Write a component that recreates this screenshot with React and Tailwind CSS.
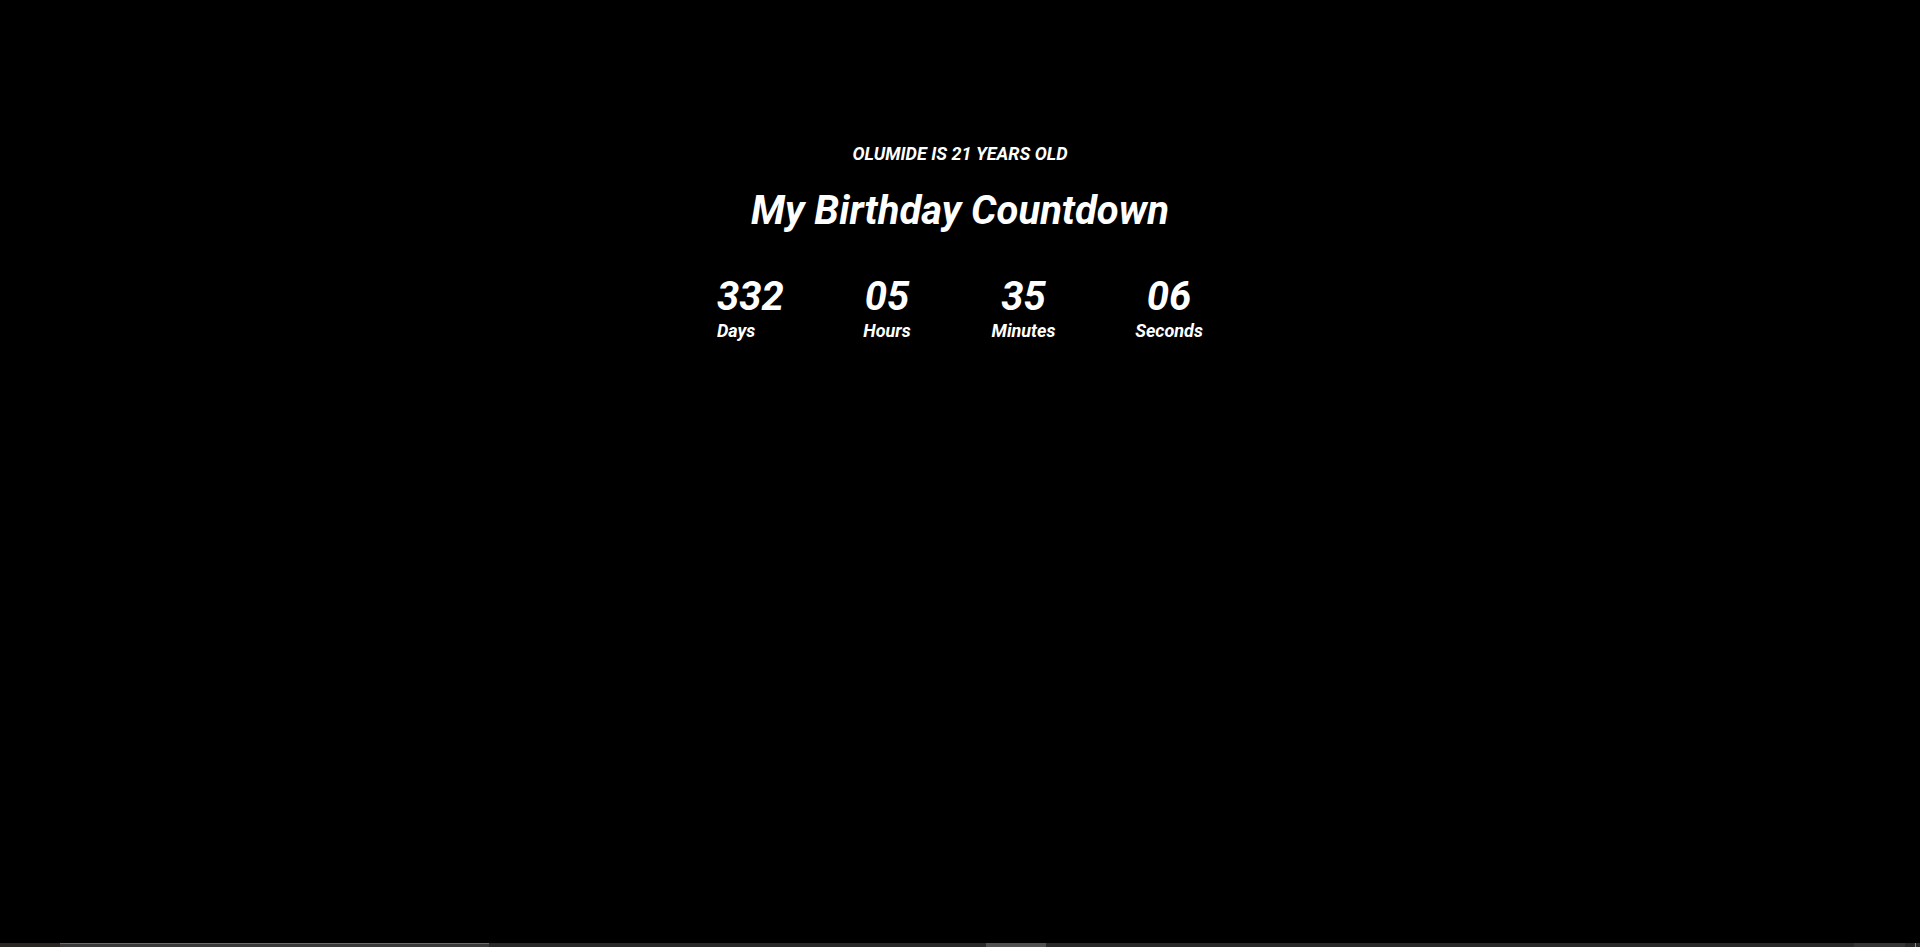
export default function App() {
  const items = [
    { n: "332", l: "Days", w: "w-[100px]", align: "text-left" },
    { n: "05", l: "Hours", w: "w-[140px]", align: "text-center" },
    { n: "35", l: "Minutes", w: "w-[133px]", align: "text-center" },
    { n: "06", l: "Seconds", w: "w-[158px]", align: "text-center" },
  ];
  return (
    <div className="relative h-[947px] w-full overflow-hidden bg-black text-white italic font-bold" style={{ fontFamily: "Roboto, 'Liberation Sans', sans-serif" }}>
      <div className="flex flex-col items-center pt-[145px]">
        <p className="text-[18px] leading-none uppercase">Olumide is 21 years old</p>
        <h1 className="mt-[28px] text-[40px] leading-none">My Birthday Countdown</h1>
        <div className="mt-[46px] flex w-full">
          <div className="w-[717px] shrink-0" />
          {items.map((it) => (
            <div key={it.l} className={`${it.w} ${it.align} shrink-0`}>
              <div className="text-[40px] leading-none">{it.n}</div>
              <div className="mt-[5px] text-[18px] leading-none">{it.l}</div>
            </div>
          ))}
        </div>
      </div>
      <div className="absolute bottom-0 left-0 right-0 flex h-[4px] bg-[#282828]">
        <div className="w-[60px] bg-[#2a2722]" />
        <div className="w-[429px] border-t border-[#6a6a6a] bg-[#3a3a3a]" />
        <div className="w-[497px]" />
        <div className="w-[60px] bg-[#505050]" />
        <div className="w-[808px]" />
        <div className="w-[51px] bg-[#353535]" />
        <div className="w-[10px]" />
        <div className="w-[1px] bg-[#8a8a8a]" />
      </div>
    </div>
  );
}
